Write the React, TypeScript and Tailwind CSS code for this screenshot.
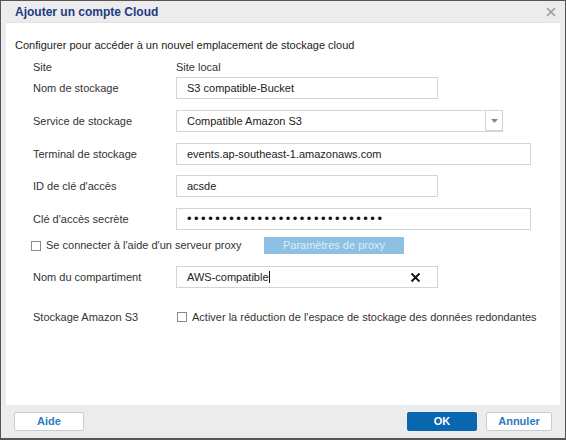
import { ReactNode } from 'react';

const font = { fontFamily: '"Liberation Sans", Arial, sans-serif' };

function Row({ label, children, mt }: { label: string; children: ReactNode; mt: string }) {
  return (
    <div className={`flex items-center h-[22px] ${mt}`}>
      <div className="w-[161px] pl-[18px] text-[11px] text-[#333]">{label}</div>
      {children}
    </div>
  );
}

function Field({ width, children }: { width: string; children: ReactNode }) {
  return (
    <div className={`${width} h-[22px] border border-[#d4d4d4] bg-white flex items-center pl-[10px] text-[11px] text-[#222]`}>
      {children}
    </div>
  );
}

function Box() {
  return <span className="inline-block w-[10px] h-[10px] border border-[#8a8a8a] bg-white" />;
}

export default function App() {
  return (
    <div
      className="w-[566px] h-[440px] flex flex-col bg-[#ececec] border border-b-2 border-[#555] overflow-hidden"
      style={font}
    >
      {/* Title bar */}
      <div className="h-[21px] flex items-center justify-between pl-[14px] pr-[8px] shrink-0">
        <span className="text-[12px] font-bold text-[#1d3b84]">Ajouter un compte Cloud</span>
        <svg width="10" height="10" viewBox="0 0 10 10" className="mr-[1px]">
          <path d="M1 1 L9 9 M9 1 L1 9" stroke="#9a9a9a" strokeWidth="1.6" />
        </svg>
      </div>

      {/* Body */}
      <div className="flex-1 mx-[5px] bg-white pl-[9px] pt-[15px] flex flex-col border-t border-[#e2e2e2]">
        <div className="text-[11px] leading-[14px] text-[#222]">
          Configurer pour accéder à un nouvel emplacement de stockage cloud
        </div>

        <div className="flex items-center mt-[8px] leading-[14px] text-[11px] text-[#333]">
          <div className="w-[161px] pl-[18px]">Site</div>
          <div>Site local</div>
        </div>

        <Row label="Nom de stockage" mt="mt-[3px]">
          <Field width="w-[262px]">S3 compatible-Bucket</Field>
        </Row>

        <Row label="Service de stockage" mt="mt-[11px]">
          <div className="w-[327px] h-[22px] border border-[#d4d4d4] flex text-[11px] text-[#222]">
            <div className="flex-1 flex items-center pl-[10px]">Compatible Amazon S3</div>
            <div className="w-[17px] border-l border-[#d4d4d4] border-b border-b-[#c9d6e6] flex items-center justify-center">
              <svg width="7" height="4" viewBox="0 0 7 4">
                <path d="M0 0 L7 0 L3.5 4 Z" fill="#888" />
              </svg>
            </div>
          </div>
        </Row>

        <Row label="Terminal de stockage" mt="mt-[11px]">
          <Field width="w-[355px]">events.ap-southeast-1.amazonaws.com</Field>
        </Row>

        <Row label="ID de clé d'accès" mt="mt-[10px]">
          <Field width="w-[262px]">acsde</Field>
        </Row>

        <Row label="Clé d'accès secrète" mt="mt-[11px]">
          <Field width="w-[355px]">
            <span className="text-[13px] tracking-[2.5px] text-[#111]">
              ••••••••••••••••••••••••••••
            </span>
          </Field>
        </Row>

        <div className="flex items-center h-[17px] mt-[7px]">
          <div className="w-[249px] flex items-center pl-[16px] gap-[5px] text-[11px] text-[#333]">
            <Box />
            <span>Se connecter à l'aide d'un serveur proxy</span>
          </div>
          <div className="w-[140px] h-[17px] bg-[#8ec0e4] flex items-center justify-center text-[11px] text-[#dcedf9]">
            Paramètres de proxy
          </div>
        </div>

        <Row label="Nom du compartiment" mt="mt-[12px]">
          <div className="w-[262px] h-[22px] border border-[#d4d4d4] flex items-center pl-[10px] pr-[16px] text-[11px] text-[#222]">
            <span>AWS-compatible</span>
            <span className="inline-block w-px h-[12px] bg-[#111]" />
            <svg width="11" height="11" viewBox="0 0 11 11" className="ml-auto">
              <path d="M1.5 1.5 L9.5 9.5 M9.5 1.5 L1.5 9.5" stroke="#111" strokeWidth="1.8" />
            </svg>
          </div>
        </Row>

        <div className="flex items-center h-[14px] mt-[22px] text-[11px] text-[#333]">
          <div className="w-[161px] pl-[18px]">Stockage Amazon S3</div>
          <div className="flex items-center gap-[5px] pl-[1px]">
            <Box />
            <span>Activer la réduction de l'espace de stockage des données redondantes</span>
          </div>
        </div>
      </div>

      {/* Footer */}
      <div className="h-[33px] shrink-0 flex items-center pl-[13px] pr-[13px]">
        <button className="w-[70px] h-[19px] bg-white border border-[#cbcbcb] rounded-[2px] text-[11px] font-bold text-[#2a7cc1]">
          Aide
        </button>
        <div className="flex-1" />
        <button className="w-[70px] h-[19px] bg-[#0967b0] rounded-[2px] text-[11px] font-bold text-white">
          OK
        </button>
        <button className="ml-[9px] w-[66px] h-[19px] bg-white border border-[#cbcbcb] rounded-[2px] text-[11px] font-bold text-[#2a7cc1]">
          Annuler
        </button>
      </div>
    </div>
  );
}
